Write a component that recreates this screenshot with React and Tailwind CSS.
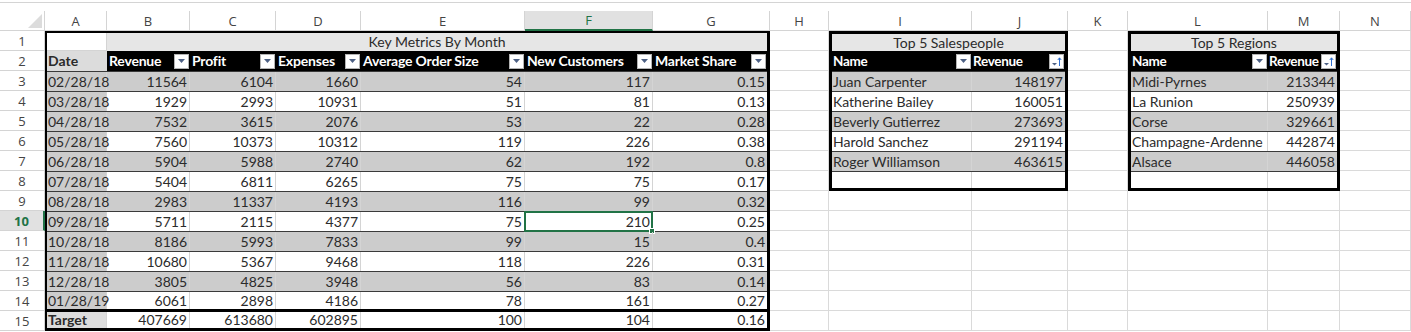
const COLS = [
  { key: 'A', w: 'w-[62px]' },
  { key: 'B', w: 'w-[83px]' },
  { key: 'C', w: 'w-[86px]' },
  { key: 'D', w: 'w-[85px]' },
  { key: 'E', w: 'w-[164px]' },
  { key: 'F', w: 'w-[128px]', active: true },
  { key: 'G', w: 'w-[117px]' },
  { key: 'H', w: 'w-[59px]' },
  { key: 'I', w: 'w-[143px]' },
  { key: 'J', w: 'w-[96px]' },
  { key: 'K', w: 'w-[60px]' },
  { key: 'L', w: 'w-[140px]' },
  { key: 'M', w: 'w-[72px]' },
  { key: 'N', w: 'w-[71px]' },
];

const metrics = [
  ['02/28/18', 11564, 6104, 1660, 54, 117, 0.15],
  ['03/28/18', 1929, 2993, 10931, 51, 81, 0.13],
  ['04/28/18', 7532, 3615, 2076, 53, 22, 0.28],
  ['05/28/18', 7560, 10373, 10312, 119, 226, 0.38],
  ['06/28/18', 5904, 5988, 2740, 62, 192, 0.8],
  ['07/28/18', 5404, 6811, 6265, 75, 75, 0.17],
  ['08/28/18', 2983, 11337, 4193, 116, 99, 0.32],
  ['09/28/18', 5711, 2115, 4377, 75, 210, 0.25],
  ['10/28/18', 8186, 5993, 7833, 99, 15, 0.4],
  ['11/28/18', 10680, 5367, 9468, 118, 226, 0.31],
  ['12/28/18', 3805, 4825, 3948, 56, 83, 0.14],
  ['01/28/19', 6061, 2898, 4186, 78, 161, 0.27],
];

const headers = [
  { label: 'Revenue', w: 'w-[83px]' },
  { label: 'Profit', w: 'w-[86px]' },
  { label: 'Expenses', w: 'w-[85px]' },
  { label: 'Average Order Size', w: 'w-[164px]' },
  { label: 'New Customers', w: 'w-[128px]' },
  { label: 'Market Share', w: 'w-[114px]' },
];

const numW = ['w-[83px]', 'w-[86px]', 'w-[85px]', 'w-[164px]', 'w-[128px]', 'w-[114px]'];

const salespeople = [
  ['Juan Carpenter', 148197],
  ['Katherine Bailey', 160051],
  ['Beverly Gutierrez', 273693],
  ['Harold Sanchez', 291194],
  ['Roger Williamson', 463615],
];

const regions = [
  ['Midi-Pyrnes', 213344],
  ['La Runion', 250939],
  ['Corse', 329661],
  ['Champagne-Ardenne', 442874],
  ['Alsace', 446058],
];

function FilterBtn() {
  return (
    <span className="ml-auto mr-[1px] w-[15px] h-[15px] shrink-0 bg-white border border-[#b4b4b4] flex items-center justify-center">
      <svg width="7" height="4" viewBox="0 0 7 4">
        <path d="M0 0h7L3.5 4z" fill="#4d6185" />
      </svg>
    </span>
  );
}

function SortBtn() {
  return (
    <span className="ml-auto mr-[1px] w-[15px] h-[15px] shrink-0 bg-white border border-[#b4b4b4] flex items-center justify-center">
      <svg width="11" height="11" viewBox="0 0 11 11">
        <path d="M1 7h5L3.5 9.5z" fill="#4d6185" />
        <path d="M8.5 10V2M6.8 4L8.5 1.8 10.2 4" stroke="#2f6fd0" strokeWidth="1" fill="none" />
      </svg>
    </span>
  );
}

function Blank({ w }) {
  return <div className={`${w} h-5 shrink-0 border-r border-b border-[#dadada]`} />;
}

function BlankColumn({ w, rows }) {
  return (
    <div className="flex flex-col">
      {Array.from({ length: rows }).map((_, i) => (
        <Blank key={i} w={w} />
      ))}
    </div>
  );
}

function SideTable({ title, rows, wName, wRev, wNameOuter, wRevOuter, boxW }) {
  return (
    <div className="flex flex-col">
      <div className={`${boxW} h-[160px] shrink-0 border-[3px] border-black flex flex-col overflow-hidden`}>
        <div className="h-[17px] shrink-0 bg-[#e6e6e6] flex items-center justify-center">{title}</div>
        <div className="h-5 shrink-0 flex bg-black text-white font-bold text-[13.5px] tracking-[-0.3px]">
          <div className={`${wName} flex items-center pl-[1px]`}>
            Name
            <FilterBtn />
          </div>
          <div className={`${wRev} flex items-center pl-[1px] whitespace-nowrap`}>
            Revenue
            <SortBtn />
          </div>
        </div>
        {rows.map(([name, rev], i) => (
          <div key={name} className={`h-5 shrink-0 flex border-t border-[#3a3a3a] ${i % 2 === 0 ? 'bg-[#cccccc]' : 'bg-white'}`}>
            <div className={`${wName} flex items-center pl-[1px] border-r border-[#d4d4d4] whitespace-nowrap overflow-hidden`}>{name}</div>
            <div className={`${wRev} flex items-center justify-end pr-[2px]`}>{rev}</div>
          </div>
        ))}
        <div className="flex-1 min-h-0 flex border-t border-[#3a3a3a] bg-white">
          <div className={`${wName} border-r border-[#d4d4d4]`} />
          <div className={wRev} />
        </div>
      </div>
      {Array.from({ length: 7 }).map((_, i) => (
        <div key={i} className="flex">
          <Blank w={wNameOuter} />
          <Blank w={wRevOuter} />
        </div>
      ))}
    </div>
  );
}

export default function App() {
  return (
    <div className="w-[1411px] h-[332px] bg-white overflow-hidden font-['Lato',sans-serif] text-[14px] leading-[18px] text-[#2b2b2b]">
      {/* Top strip */}
      <div className="h-[11px] pt-[2px]">
        <div className="border-t border-[#d4d4d4]" />
      </div>

      {/* Column letters */}
      <div className="flex h-5 font-['Open_Sans',sans-serif] text-[13px] text-[#444]">
        <div className="w-[45px] h-5 shrink-0 border-r border-b border-[#d4d4d4] flex items-end justify-end pr-[2px] pb-[2px]">
          <svg width="14" height="14" viewBox="0 0 14 14">
            <path d="M14 0V14H0z" fill="#dcdcdc" />
          </svg>
        </div>
        {COLS.map((c) => (
          <div
            key={c.key}
            className={`${c.w} h-5 shrink-0 border-r border-[#d4d4d4] flex items-center justify-center ${
              c.active ? 'bg-[#e1e1e1] text-[#217346] border-b-2 border-b-[#217346]' : 'border-b'
            }`}
          >
            {c.key}
          </div>
        ))}
      </div>

      <div className="flex items-start">
        {/* Row numbers */}
        <div className="flex flex-col font-['Open_Sans',sans-serif] text-[13px] text-[#444]">
          {Array.from({ length: 15 }).map((_, i) => (
            <div
              key={i}
              className={`w-[45px] h-5 border-b border-[#d4d4d4] flex items-center justify-center ${
                i === 9 ? 'bg-[#e1e1e1] text-[#217346] font-bold border-r-2 border-r-[#217346]' : 'border-r'
              }`}
            >
              {i + 1}
            </div>
          ))}
        </div>

        {/* Key metrics table */}
        <div className="w-[725px] h-[300px] shrink-0 border-black border-t-2 border-l-2 border-r-[3px] border-b-[3px] flex flex-col">
          <div className="h-[18px] shrink-0 flex">
            <div className="w-[60px] bg-white border-r border-b border-[#d4d4d4]" />
            <div className="flex-1 bg-[#e6e6e6] flex items-center justify-center">Key Metrics By Month</div>
          </div>
          <div className="h-5 shrink-0 flex">
            <div className="w-[60px] bg-[#dcdcdc] font-bold flex items-center pl-[1px]">Date</div>
            {headers.map((h) => (
              <div key={h.label} className={`${h.w} bg-black text-white font-bold tracking-[-0.2px] flex items-center pl-[2px] whitespace-nowrap`}>
                {h.label}
                <FilterBtn />
              </div>
            ))}
          </div>
          {metrics.map((row, r) => (
            <div
              key={row[0]}
              className={`${r === 11 ? 'h-[18px]' : 'h-5'} shrink-0 flex border-t border-[#3a3a3a] ${r % 2 === 0 ? 'bg-[#cccccc]' : 'bg-white'}`}
            >
              <div className="w-[60px] bg-[#cccccc] border-r border-[#d4d4d4] flex items-center pl-[1px]">{row[0]}</div>
              {row.slice(1).map((v, j) => (
                <div
                  key={j}
                  className={`${numW[j]} relative flex items-center justify-end pr-[2px] ${j < 5 ? 'border-r border-[#d4d4d4]' : ''}`}
                >
                  {v}
                  {r === 7 && j === 4 && (
                    <span className="absolute -left-[1px] -top-[1px] -right-[1px] -bottom-[1px] border-2 border-[#217346]">
                      <span className="absolute -right-[4px] -bottom-[4px] w-[6px] h-[6px] bg-[#217346] border border-white" />
                    </span>
                  )}
                </div>
              ))}
            </div>
          ))}
          <div className="flex-1 min-h-0 flex border-t-[3px] border-black bg-white">
            <div className="w-[60px] bg-[#dcdcdc] font-bold border-r border-[#d4d4d4] flex items-center pl-[1px]">Target</div>
            {[407669, 613680, 602895, 100, 104, 0.16].map((v, j) => (
              <div key={j} className={`${numW[j]} flex items-center justify-end pr-[2px] ${j < 5 ? 'border-r border-[#d4d4d4]' : ''}`}>
                {v}
              </div>
            ))}
          </div>
        </div>

        <BlankColumn w="w-[59px]" rows={15} />

        <SideTable
          title="Top 5 Salespeople"
          rows={salespeople}
          boxW="w-[239px]"
          wName="w-[140px]"
          wRev="w-[93px]"
          wNameOuter="w-[143px]"
          wRevOuter="w-[96px]"
        />

        <BlankColumn w="w-[60px]" rows={15} />

        <SideTable
          title="Top 5 Regions"
          rows={regions}
          boxW="w-[212px]"
          wName="w-[137px]"
          wRev="w-[69px]"
          wNameOuter="w-[140px]"
          wRevOuter="w-[72px]"
        />

        <BlankColumn w="w-[71px]" rows={15} />
      </div>
    </div>
  );
}
